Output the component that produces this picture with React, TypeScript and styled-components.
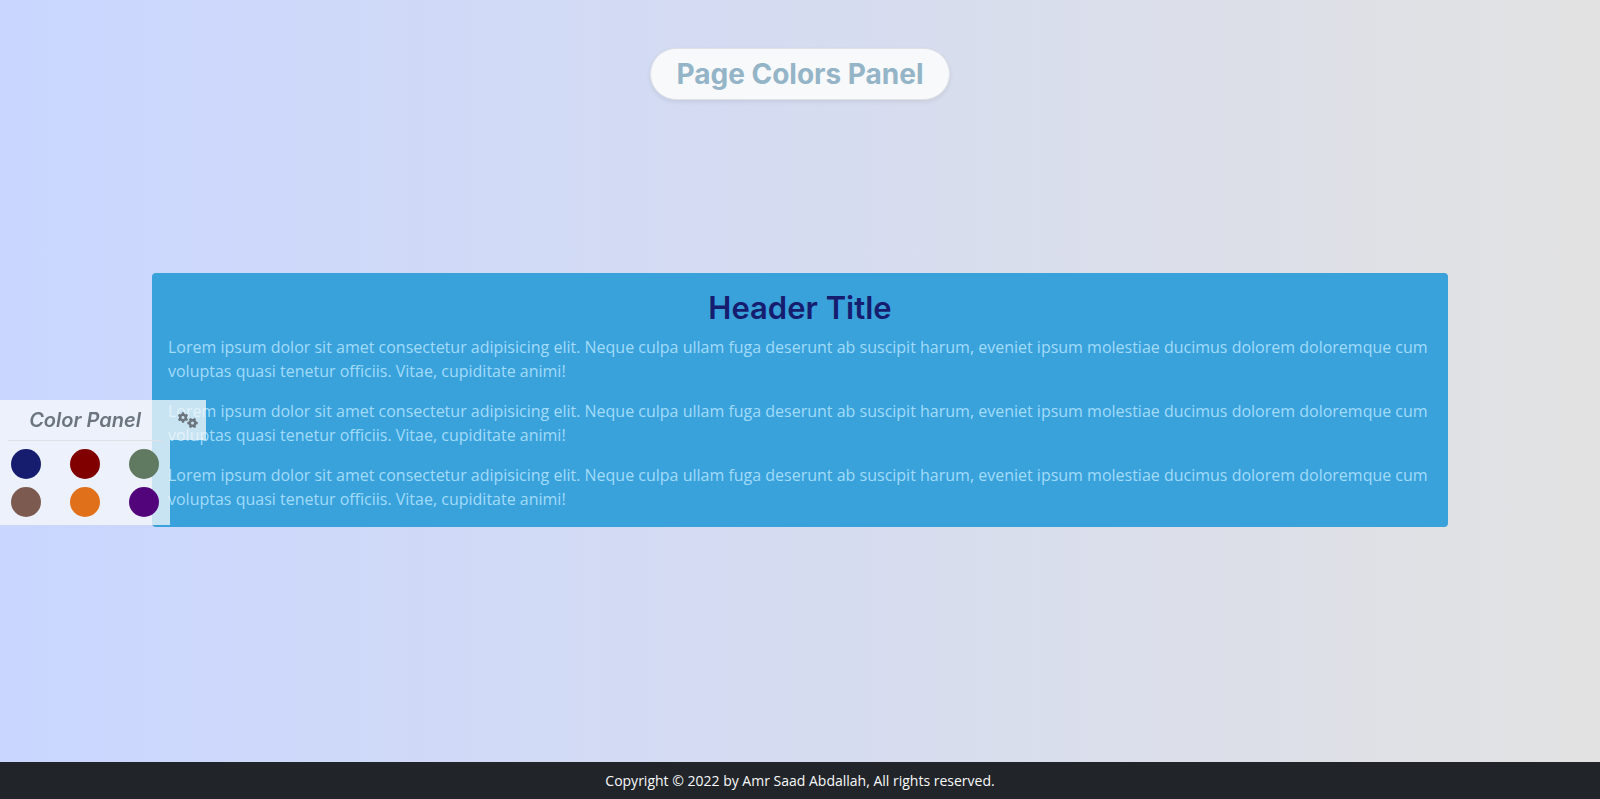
import React, { useState } from 'react';
import styled, { createGlobalStyle } from 'styled-components';
import { FaGears } from 'react-icons/fa6';

const headingFont = 'Inter, "Liberation Sans", sans-serif';
const bodyFont = '"Open Sans", "Liberation Sans", sans-serif';

const GlobalStyle = createGlobalStyle`
  *, *::before, *::after { box-sizing: border-box; }
  body {
    margin: 0;
    font: 400 16px/24px ${bodyFont};
    color: #212529;
  }
`;

const Page = styled.div`
  display: grid;
  grid-template-rows: 1fr auto 1fr;
  grid-template-columns: minmax(0, 1fr);
  min-height: 100vh;
  background: linear-gradient(to right, #c9d6ff, #e2e2e2);
`;

const PageHeader = styled.header`
  display: flex;
  justify-content: center;
  align-items: flex-start;
  padding: 48px 12px;
`;

const PageTitle = styled.h1`
  margin: 0;
  padding: 8px 25px;
  border: 1px solid #dee2e6;
  border-radius: 800px;
  background: #f8f9fa;
  box-shadow: 0 2px 4px rgba(0, 0, 0, 0.075);
  color: #94b4c7;
  font: 700 28px/34px ${headingFont};
`;

const Main = styled.main`
  width: 100%;
  max-width: 1320px;
  margin: 0 auto;
  padding: 0 12px;
`;

const Card = styled.article`
  display: flex;
  flex-direction: column;
  gap: 16px;
  padding: 16px;
  border-radius: 4px;
  background: #39a2db;
  color: #a2dbfa;
`;

const CardTitle = styled.h2<{ $color: string }>`
  margin: 0 0 -8px;
  color: ${({ $color }) => $color};
  font: 600 31px/38px ${headingFont};
  text-align: center;
`;

const Paragraph = styled.p`
  margin: 0;
`;

const FooterArea = styled.div`
  display: flex;
  align-items: flex-end;
`;

const Footer = styled.footer`
  flex: 1;
  padding: 8px;
  background: #212529;
  color: #f8f9fa;
  font-size: 14px;
  font-weight: 500;
  line-height: 21px;
  text-align: center;
`;

const Panel = styled.aside<{ $open: boolean }>`
  position: fixed;
  top: 50%;
  left: ${({ $open }) => ($open ? '0' : '-170px')};
  display: flex;
  align-items: flex-start;
  transition: left 0.3s;
`;

const PanelBody = styled.div`
  width: 170px;
  background: rgba(248, 249, 250, 0.75);
`;

const PanelTitle = styled.h3`
  margin: 0 8px;
  height: 41px;
  border-bottom: 1px solid #dee2e6;
  color: #6c757d;
  font: italic 600 20px/40px ${headingFont};
  text-align: center;
`;

const Swatches = styled.div`
  display: grid;
  grid-template-columns: repeat(3, 30px);
  justify-content: space-between;
  row-gap: 8px;
  padding: 8px 11px;
`;

const Swatch = styled.button<{ $color: string }>`
  width: 30px;
  height: 30px;
  padding: 0;
  border: 0;
  border-radius: 50%;
  background: ${({ $color }) => $color};
  cursor: pointer;
`;

const PanelToggle = styled.button`
  display: grid;
  place-items: center;
  width: 36px;
  height: 40px;
  padding: 0;
  border: 0;
  background: rgba(248, 249, 250, 0.75);
  color: #6c757d;
  font-size: 16px;
  cursor: pointer;

  svg {
    width: 20px;
    height: 16px;
  }
`;

const colors = [
  { name: 'Navy', value: '#161d6f' },
  { name: 'Maroon', value: '#800000' },
  { name: 'Green', value: '#5f7a61' },
  { name: 'Brown', value: '#7d5a50' },
  { name: 'Orange', value: '#e1701a' },
  { name: 'Purple', value: '#52057b' },
];

const lorem =
  'Lorem ipsum dolor sit amet consectetur adipisicing elit. Neque culpa ullam fuga deserunt ab suscipit harum, eveniet ipsum molestiae ducimus dolorem doloremque cum voluptas quasi tenetur officiis. Vitae, cupiditate animi!';

export default function App() {
  const [color, setColor] = useState(colors[0].value);
  const [open, setOpen] = useState(true);

  return (
    <>
      <GlobalStyle />
      <Page>
        <PageHeader>
          <PageTitle>Page Colors Panel</PageTitle>
        </PageHeader>
        <Main>
          <Card>
            <CardTitle $color={color}>Header Title</CardTitle>
            <Paragraph>{lorem}</Paragraph>
            <Paragraph>{lorem}</Paragraph>
            <Paragraph>{lorem}</Paragraph>
          </Card>
        </Main>
        <FooterArea>
          <Footer>Copyright © 2022 by Amr Saad Abdallah, All rights reserved.</Footer>
        </FooterArea>
      </Page>
      <Panel $open={open}>
        <PanelBody>
          <PanelTitle>Color Panel</PanelTitle>
          <Swatches>
            {colors.map(({ name, value }) => (
              <Swatch key={name} type="button" aria-label={name} $color={value} onClick={() => setColor(value)} />
            ))}
          </Swatches>
        </PanelBody>
        <PanelToggle type="button" aria-label="Toggle color panel" aria-expanded={open} onClick={() => setOpen(!open)}>
          <FaGears />
        </PanelToggle>
      </Panel>
    </>
  );
}
